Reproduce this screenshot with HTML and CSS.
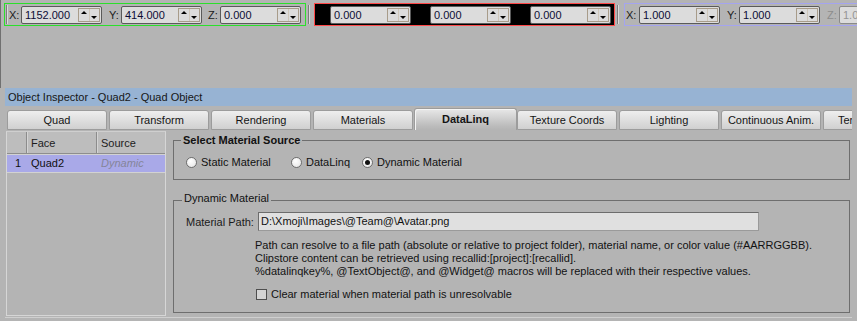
FILE: index.html
```html
<!DOCTYPE html>
<html>
<head>
<meta charset="utf-8">
<link rel="stylesheet" href="styles.css">
</head>
<body>
<div class="top">
  <div class="toolbar">
    <div class="group g-pos">
      <span class="grip in"></span>
      <span class="lbl">X:</span>
      <div class="spin"><span class="val">1152.000</span><span class="btns"><i class="up"></i><i class="dn"></i></span></div>
      <span class="lbl l2">Y:</span>
      <div class="spin"><span class="val">414.000</span><span class="btns"><i class="up"></i><i class="dn"></i></span></div>
      <span class="lbl l3">Z:</span>
      <div class="spin"><span class="val">0.000</span><span class="btns"><i class="up"></i><i class="dn"></i></span></div>
    </div>
    <span class="grip out"></span>
    <div class="group g-rot">
      <div class="spin"><span class="val">0.000</span><span class="btns"><i class="up"></i><i class="dn"></i></span></div>
      <div class="spin"><span class="val">0.000</span><span class="btns"><i class="up"></i><i class="dn"></i></span></div>
      <div class="spin"><span class="val">0.000</span><span class="btns"><i class="up"></i><i class="dn"></i></span></div>
    </div>
    <span class="grip out"></span>
    <div class="group g-scale">
      <span class="lbl b1">X:</span>
      <div class="spin"><span class="val">1.000</span><span class="btns"><i class="up"></i><i class="dn"></i></span></div>
      <span class="lbl l2">Y:</span>
      <div class="spin"><span class="val">1.000</span><span class="btns"><i class="up"></i><i class="dn"></i></span></div>
      <span class="lbl l2 dis">Z:</span>
      <div class="spin dis"><span class="val">1.000</span><span class="btns"><i class="up"></i><i class="dn"></i></span></div>
    </div>
  </div>
</div>

<div class="inspector">
  <div class="title">Object Inspector - Quad2 - Quad Object</div>
  <div class="tabs">
    <div class="tab">Quad</div>
    <div class="tab">Transform</div>
    <div class="tab">Rendering</div>
    <div class="tab">Materials</div>
    <div class="tab active">DataLinq</div>
    <div class="tab">Texture Coords</div>
    <div class="tab">Lighting</div>
    <div class="tab">Continuous Anim.</div>
    <div class="tab last">Template</div>
  </div>
  <div class="page">
    <div class="list">
      <div class="lh">
        <span class="c0"></span><span class="c1">Face</span><span class="c2">Source</span>
      </div>
      <div class="lr sel">
        <span class="c0">1</span><span class="c1">Quad2</span><span class="c2 dyn">Dynamic</span>
      </div>
    </div>
    <div class="right">
      <fieldset class="grp g1">
        <legend class="bold">Select Material Source</legend>
        <div class="radios">
          <label class="radio r1"><span class="dot"></span>Static Material</label>
          <label class="radio r2"><span class="dot"></span>DataLinq</label>
          <label class="radio r3"><span class="dot on"></span>Dynamic Material</label>
        </div>
      </fieldset>
      <fieldset class="grp g2">
        <legend class="lg2">Dynamic Material</legend>
        <div class="pathrow">
          <span class="plbl">Material Path:</span>
          <div class="pinput">D:\Xmoji\Images\@Team@\Avatar.png</div>
        </div>
        <div class="desc">
          <div>Path can resolve to a file path (absolute or relative to project folder), material name, or color value (#AARRGGBB).</div>
          <div>Clipstore content can be retrieved using recallid:[project]:[recallid].</div>
          <div>%datalinqkey%, @TextObject@, and @Widget@ macros will be replaced with their respective values.</div>
        </div>
        <label class="check"><span class="box"></span>Clear material when material path is unresolvable</label>
      </fieldset>
    </div>
  </div>
</div>
</body>
</html>
```
FILE: styles.css
```css
* { box-sizing: border-box; }
html, body { margin: 0; padding: 0; }
body {
  width: 857px;
  height: 321px;
  overflow: hidden;
  background: #b4b4b4;
  font-family: "Liberation Sans", Arial, sans-serif;
  font-size: 11px;
  color: #111;
}

/* ---------- toolbar ---------- */
.top { height: 88px; border-left: 1px solid #707070; }
.toolbar {
  display: flex;
  align-items: flex-start;
  padding-top: 3px;
  white-space: nowrap;
}
.group {
  display: flex;
  align-items: center;
  height: 23px;
  border: 1px solid;
  flex: none;
}
.g-pos { margin-left: 3px; width: 302px; border-color: #2be02b; }
.g-rot { margin-left: 4px; width: 301px; border-color: #ff4848; background: #000; padding-left: 15px; gap: 19px; }
.g-scale { margin-left: 5px; width: 320px; border-color: #a4a4f0; }

.grip {
  flex: none;
  width: 2px;
  height: 19px;
  border-left: 1px solid #7c7c7c;
  border-right: 1px solid #dadada;
}
.grip.in { margin-left: 1px; }
.grip.out { margin-left: 2px; margin-top: 2px; }

.lbl { flex: none; width: 12px; margin-left: 1px; color: #1a1a1a; }
.lbl.b1 { width: 13px; }
.lbl.l2 { margin-left: 7px; }
.lbl.l3 { margin-left: 6px; }
.lbl.dis { color: #8c8c8c; }

.spin {
  flex: none;
  width: 81px;
  height: 18px;
  border: 1px solid #5a5a5a;
  border-radius: 2px;
  background: #dcdcdc;
  display: flex;
  align-items: center;
  padding-left: 3px;
}
.spin .val { flex: 1; color: #0c0c34; }
.spin.dis { border-color: #8a8a8a; }
.spin.dis .val { color: #949494; }

.btns {
  flex: none;
  width: 22px;
  height: 14px;
  margin-right: 1px;
  border: 1px solid #a89c8a;
  display: flex;
}
.btns i { flex: 1; display: flex; justify-content: center; }
.btns .up { border-right: 1px solid #cfc7ba; }
.btns .up::before {
  content: "";
  width: 0; height: 0;
  margin-top: 2px;
  border-left: 3px solid transparent;
  border-right: 3px solid transparent;
  border-bottom: 3px solid #000;
}
.btns .dn::before {
  content: "";
  width: 0; height: 0;
  margin-top: 7px;
  border-left: 3px solid transparent;
  border-right: 3px solid transparent;
  border-top: 3px solid #000;
}

/* ---------- inspector ---------- */
.inspector { margin-left: 5px; width: 847px; }
.title {
  height: 18px;
  line-height: 18px;
  background: #97b3d3;
  padding-left: 3px;
  color: #161616;
}
.tabs {
  display: flex;
  align-items: flex-end;
  height: 24px;
  padding-left: 2px;
  gap: 2px;
  white-space: nowrap;
  overflow: hidden;
}
.tab {
  flex: none;
  width: 100px;
  height: 20px;
  line-height: 18px;
  text-align: center;
  border: 1px solid #9c9c9c;
  border-radius: 3px 3px 0 0;
  background: linear-gradient(#eeeeee, #d0d0d0);
  color: #141414;
}
.tab.last { text-align: left; padding-left: 14px; }
.tab.active {
  width: 103px;
  height: 22px;
  line-height: 20px;
  margin-left: -1px;
  margin-right: -2px;
  border-bottom: none;
  font-weight: bold;
  background: linear-gradient(#e8e8e8, #bcbcbc 80%, #b4b4b4);
  box-shadow: inset 1px 1px 0 #f4f4f4;
}

.page {
  display: flex;
  height: 188px;
  border-bottom: 1px solid #cfcfcf;
}

/* list */
.list {
  flex: none;
  width: 160px;
  height: 185px;
  margin: 1px 0 0 1px;
  border: 1px solid #d6d6d6;
  border-top-color: #cfcfcf;
}
.lh, .lr { display: flex; }
.lh {
  height: 22px;
  background: #bdbdbd;
  border-bottom: 1px solid #8e8e8e;
  box-shadow: 0 1px 0 #d2d2d2;
  align-items: stretch;
}
.lh span { display: flex; align-items: center; color: #1c1c1c; }
.c0 { width: 20px; flex: none; justify-content: flex-end; padding-right: 6px; }
.c1 { width: 70px; flex: none; padding-left: 4px; }
.c2 { flex: 1; padding-left: 4px; }
.lh .c0, .lh .c1 { border-right: 1px solid #8c8c8c; box-shadow: 1px 0 0 #d4d4d4; }
.lr {
  margin-top: 1px;
  height: 18px;
  line-height: 17px;
  border-bottom: 1px solid #d2d2d2;
}
.lr.sel { background: #a9a9e8; }
.lr .c0 { display: flex; }
.dyn { font-style: italic; color: #85859a; }

/* right side */
.right { flex: none; width: 677px; margin-left: 7px; }
.grp {
  margin: 0;
  padding: 0 0 0 12px;
  border: 1px solid #6e6e6e;
  min-width: 0;
}
.grp legend {
  margin-left: -5px;
  padding: 0 2px;
  line-height: 14px;
  color: #111;
}
.bold { font-weight: bold; }
.g1 { margin-top: 3px; padding-bottom: 8px; }
.g2 { margin-top: 11px; padding-bottom: 11px; }
.g2 .lg2 { padding-bottom: 4px; margin-left: -4px; }

.radios {
  display: flex;
  align-items: center;
  height: 18px;
  margin-top: 6px;
}
.radio { display: flex; align-items: center; flex: none; }
.r1 { width: 105px; }
.r2 { width: 71px; }
.dot {
  width: 11px;
  height: 11px;
  border-radius: 50%;
  border: 1px solid #6e6e6e;
  background: radial-gradient(circle at 40% 35%, #ffffff, #e2e2e2);
  margin-right: 4px;
  display: flex;
  align-items: center;
  justify-content: center;
}
.dot.on::after {
  content: "";
  width: 5px;
  height: 5px;
  border-radius: 50%;
  background: #111;
}

.pathrow {
  display: flex;
  align-items: center;
  margin-top: 3px;
  height: 19px;
}
.plbl { flex: none; width: 72px; color: #1a1a1a; }
.pinput {
  flex: none;
  width: 501px;
  height: 19px;
  line-height: 17px;
  padding-left: 2px;
  border: 1px solid #6c6c6c;
  border-right-color: #9a9a9a;
  border-bottom-color: #9a9a9a;
  background: #e0e0e0;
  color: #111;
}
.desc {
  margin-top: 8px;
  padding-left: 69px;
  line-height: 13px;
  color: #121212;
}
.check {
  display: flex;
  align-items: center;
  height: 14px;
  margin-top: 9px;
  padding-left: 70px;
  color: #121212;
}
.box {
  width: 11px;
  height: 11px;
  border: 1px solid #4e4e4e;
  background: #d4d4d4;
  margin-right: 4px;
  flex: none;
}
```
